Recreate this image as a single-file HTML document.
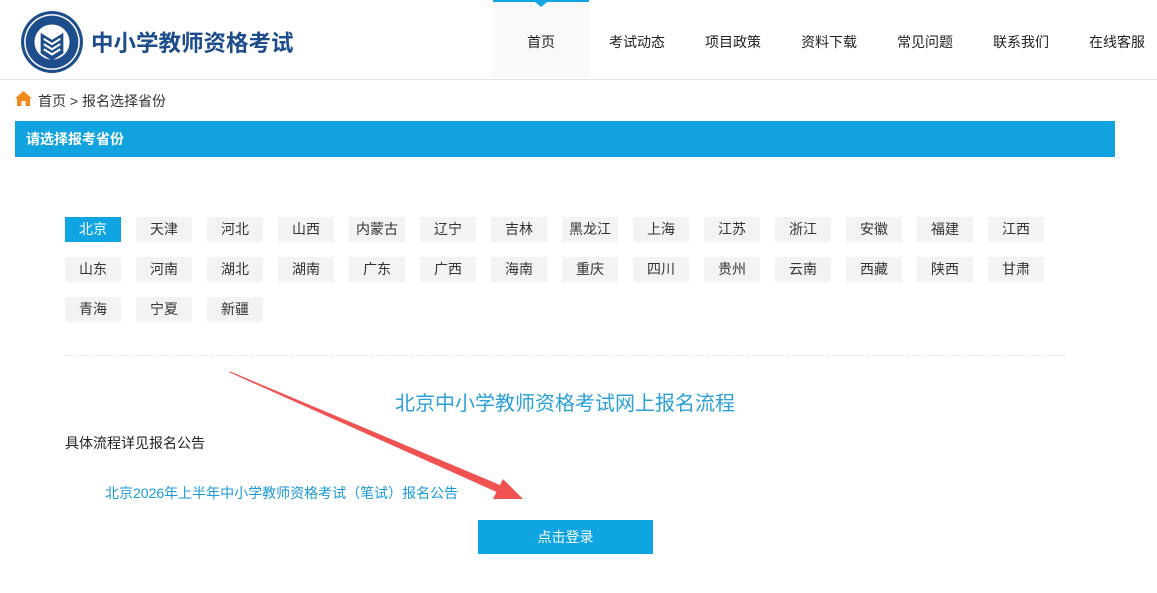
<!DOCTYPE html>
<html><head><meta charset="utf-8"><style>
*{margin:0;padding:0;box-sizing:border-box}
body{width:1157px;height:593px;overflow:hidden;background:#fff;font-family:"Liberation Sans","Noto Sans CJK SC",sans-serif;color:#333;position:relative}
.a{position:absolute}
.nav{position:absolute;top:0;height:78px;width:96px;text-align:center;line-height:84px;font-size:14px;color:#222}
.p{position:absolute;width:56px;height:25px;background:#f3f3f3;text-align:center;line-height:25px;font-size:14px;color:#333}
</style></head><body>
<svg class="a" style="left:20px;top:10px" width="64" height="64" viewBox="0 0 62 62">
<circle cx="31" cy="31" r="30" fill="#1e4d8c"/><circle cx="31" cy="31" r="27" fill="#fff"/><circle cx="31" cy="31" r="25.5" fill="#1e4d8c"/><circle cx="31" cy="31" r="17" fill="#fff"/>
<path d="M20 22 L31 29 L42 22 L42 42 L31 49 L20 42Z" fill="#1e4d8c"/>
<path d="M23 28 L31 33 L39 28 M23 33 L31 38 L39 33 M23 38 L31 43 L39 38" stroke="#fff" stroke-width="2" fill="none"/>
</svg>
<div class="a" style="left:91px;top:26px;font-size:22.5px;color:#1e4d8c;font-weight:bold">中小学教师资格考试</div>
<div class="a" style="left:493px;top:0;width:96px;height:78px;background:#f9f9f9;border-top:2px solid #0ea5e0"></div>
<div class="a" style="left:535px;top:2px;width:0;height:0;border-left:6px solid transparent;border-right:6px solid transparent;border-top:5px solid #0ea5e0"></div>
<div class="nav" style="left:493px">首页</div>
<div class="nav" style="left:589px">考试动态</div>
<div class="nav" style="left:685px">项目政策</div>
<div class="nav" style="left:781px">资料下载</div>
<div class="nav" style="left:877px">常见问题</div>
<div class="nav" style="left:973px">联系我们</div>
<div class="nav" style="left:1069px">在线客服</div>
<div class="a" style="left:0;top:79px;width:1157px;height:1px;background:#e5e5e5"></div>
<svg class="a" style="left:15px;top:91px" width="17" height="15" viewBox="0 0 17 15"><path d="M8.5 0 L17 7.5 L15 7.5 L15 15 L10.5 15 L10.5 10 L6.5 10 L6.5 15 L2 15 L2 7.5 L0 7.5Z" fill="#f08a1c"/></svg>
<div class="a" style="left:38px;top:91px;font-size:14px;color:#333">首页 &gt; 报名选择省份</div>
<div class="a" style="left:15px;top:121px;width:1100px;height:36px;background:#10a3e0;color:#fff;font-size:14px;font-weight:bold;line-height:36px;padding-left:11px">请选择报考省份</div>
<div class="p" style="left:65px;top:217px;background:#0ea5e2;color:#fff">北京</div>
<div class="p" style="left:136px;top:217px">天津</div>
<div class="p" style="left:207px;top:217px">河北</div>
<div class="p" style="left:278px;top:217px">山西</div>
<div class="p" style="left:349px;top:217px">内蒙古</div>
<div class="p" style="left:420px;top:217px">辽宁</div>
<div class="p" style="left:491px;top:217px">吉林</div>
<div class="p" style="left:562px;top:217px">黑龙江</div>
<div class="p" style="left:633px;top:217px">上海</div>
<div class="p" style="left:704px;top:217px">江苏</div>
<div class="p" style="left:775px;top:217px">浙江</div>
<div class="p" style="left:846px;top:217px">安徽</div>
<div class="p" style="left:917px;top:217px">福建</div>
<div class="p" style="left:988px;top:217px">江西</div>
<div class="p" style="left:65px;top:257px">山东</div>
<div class="p" style="left:136px;top:257px">河南</div>
<div class="p" style="left:207px;top:257px">湖北</div>
<div class="p" style="left:278px;top:257px">湖南</div>
<div class="p" style="left:349px;top:257px">广东</div>
<div class="p" style="left:420px;top:257px">广西</div>
<div class="p" style="left:491px;top:257px">海南</div>
<div class="p" style="left:562px;top:257px">重庆</div>
<div class="p" style="left:633px;top:257px">四川</div>
<div class="p" style="left:704px;top:257px">贵州</div>
<div class="p" style="left:775px;top:257px">云南</div>
<div class="p" style="left:846px;top:257px">西藏</div>
<div class="p" style="left:917px;top:257px">陕西</div>
<div class="p" style="left:988px;top:257px">甘肃</div>
<div class="p" style="left:65px;top:297px">青海</div>
<div class="p" style="left:136px;top:297px">宁夏</div>
<div class="p" style="left:207px;top:297px">新疆</div>
<div class="a" style="left:65px;top:355px;width:1000px;border-top:1px dashed #e3e3e3"></div>
<div class="a" style="left:365px;top:387px;width:400px;text-align:center;font-size:20px;color:#2a9fd8">北京中小学教师资格考试网上报名流程</div>
<div class="a" style="left:65px;top:433px;font-size:14px;color:#222">具体流程详见报名公告</div>
<div class="a" style="left:105px;top:483px;font-size:14px;color:#1a9ad6">北京2026年上半年中小学教师资格考试（笔试）报名公告</div>
<div class="a" style="left:478px;top:520px;width:175px;height:34px;background:#0ea5e2;color:#fff;text-align:center;line-height:34px;font-size:14px">点击登录</div>
<svg class="a" style="left:0;top:0" width="1157" height="593">
<path d="M230 372 L501 486 L498 492 Z" fill="#f05252" stroke="#f05252" stroke-width="1.2" stroke-linejoin="round"/>
<path d="M503 479 L523 499 L493 499 Z" fill="#f05252"/>
</svg>
</body></html>
